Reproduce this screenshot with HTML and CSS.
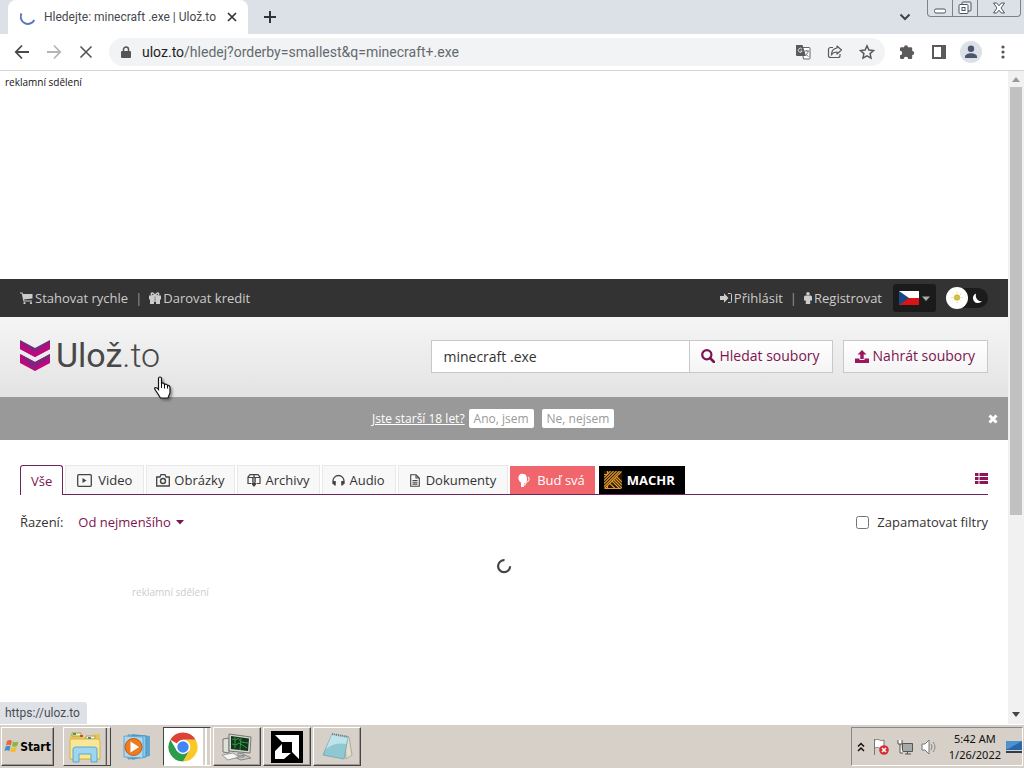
FILE: index.html
```html
<!DOCTYPE html>
<html lang="cs">
<head>
<meta charset="utf-8">
<title>Hledejte: minecraft .exe | Ulož.to</title>
<link rel="stylesheet" href="styles.css">
</head>
<body>
<div class="tabstrip">
  <div class="browser-tab">
    <svg class="tab-spinner" width="16" height="16" viewBox="0 0 16 16"><path d="M1.500 4.500a7 7 0 0 0 12.800 6.500" fill="none" stroke="#5a78bd" stroke-width="2"/></svg>
    <span class="tab-title">Hledejte: minecraft .exe | Ulož.to</span>
    <button class="plain" aria-label="Close tab"><svg width="10" height="10" viewBox="0 0 10 10"><path d="M1 1l8 8M9 1l-8 8" stroke="#333" stroke-width="1.700"/></svg></button>
  </div>
  <button class="plain new-tab" aria-label="New tab"><svg width="12" height="12" viewBox="0 0 12 12"><path d="M6 0v12M0 6h12" stroke="#333" stroke-width="2"/></svg></button>
  <button class="plain tab-search" aria-label="Search tabs"><svg width="12" height="8" viewBox="0 0 12 8"><path d="M1.500 1.500L6 6l4.500-4.500" fill="none" stroke="#444" stroke-width="2"/></svg></button>
  <div class="window-buttons">
    <button aria-label="Minimize"><svg width="14" height="14" viewBox="0 0 14 14"><rect x="1.500" y="8" width="11" height="4" rx="1.500" fill="#fff" stroke="#4d5561"/></svg></button>
    <button aria-label="Restore"><svg width="14" height="14" viewBox="0 0 14 14"><rect x="4" y="1" width="9" height="9" rx="1" fill="#eee" stroke="#4d5561"/><rect x="1" y="3.500" width="9" height="9" rx="1" fill="#fff" stroke="#4d5561"/><rect x="4" y="6.500" width="3" height="3" fill="none" stroke="#4d5561"/></svg></button>
    <button class="wide" aria-label="Close"><svg width="14" height="14" viewBox="0 0 14 14"><path d="M1.500 2h3.200L7 4.800 9.300 2h3.200L9 7l3.500 5H9.300L7 9.200 4.700 12H1.500L5 7z" fill="#fff" stroke="#4d5561"/></svg></button>
  </div>
</div>

<div class="toolbar">
  <button class="plain" aria-label="Back"><svg width="16" height="16" viewBox="0 0 16 16"><path d="M15 8H2M8 1.500L1.800 8 8 14.500" fill="none" stroke="#4a4a4a" stroke-width="1.800"/></svg></button>
  <button class="plain" aria-label="Forward"><svg width="16" height="16" viewBox="0 0 16 16"><path d="M1 8h13M8 1.500L14.200 8 8 14.500" fill="none" stroke="#b5b5b5" stroke-width="1.800"/></svg></button>
  <button class="plain" aria-label="Stop"><svg width="16" height="16" viewBox="0 0 16 16"><path d="M2.500 2.500l11 11M13.500 2.500l-11 11" stroke="#555" stroke-width="1.600"/></svg></button>
  <div class="omnibox">
    <svg width="10" height="13" viewBox="0 0 10 13"><path d="M2.500 6V3.500a2.500 2.500 0 0 1 5 0V6" fill="none" stroke="#555" stroke-width="1.500"/><rect y="5" width="10" height="7" rx="1" fill="#555"/></svg>
    <span class="url"><b>uloz.to</b>/hledej?orderby=smallest&amp;q=minecraft+.exe</span>
    <button class="plain" aria-label="Translate"><svg width="16" height="16" viewBox="0 0 16 16"><path d="M6.500 3.500H14a1 1 0 0 1 1 1V14a1 1 0 0 1-1 1H8.500z" fill="#fff" stroke="#666"/><path d="M1 1h6.500L11 12H2a1 1 0 0 1-1-1z" fill="#5a5a5a"/><path d="M7 5.200A2 2 0 1 0 7.200 7H5.300" fill="none" stroke="#ddd"/><path d="M9.500 7h4.500M11.800 6v1M13 7c0 2-1 3-2 3.500l2.500 2" fill="none" stroke="#777"/></svg></button>
    <button class="plain" aria-label="Share"><svg width="16" height="16" viewBox="0 0 16 16"><path d="M6 3.500H3.500a2 2 0 0 0-2 2v6a2 2 0 0 0 2 2H11a2 2 0 0 0 2-2V10M10 2l4.500 4L10 10V8C7 8 5.500 9 4.500 11c0-3 1.500-6.500 5.500-7z" fill="none" stroke="#5a5a5a" stroke-width="1.200" stroke-linejoin="round"/></svg></button>
    <button class="plain" aria-label="Bookmark"><svg width="16" height="16" viewBox="0 0 16 16"><path d="M8 1.800l1.900 4.200 4.600.5-3.400 3.100.9 4.500L8 11.800l-4 2.300.9-4.500L1.500 6.500 6.100 6z" fill="none" stroke="#5a5a5a" stroke-width="1.500"/></svg></button>
  </div>
  <div class="tools">
    <button class="plain" aria-label="Extensions"><svg width="16" height="16" viewBox="0 0 16 16"><path d="M5 3.200a2 2 0 0 1 4 0h3a1.200 1.200 0 0 1 1.200 1.200V7a2 2 0 0 1 0 4v2.800A1.200 1.200 0 0 1 12 15H9.200a2.200 2.200 0 0 0-4.400 0H2.200A1.200 1.200 0 0 1 1 13.800v-2.600a2.200 2.200 0 0 0 0-4.400V4.400a1.200 1.200 0 0 1 1.200-1.200z" fill="#5a5a5a"/></svg></button>
    <button class="plain" aria-label="Side panel"><svg width="16" height="16" viewBox="0 0 16 16"><path d="M1 1h14v14H1z" fill="#5a5a5a"/><path d="M3 3h7v10H3z" fill="#fff"/></svg></button>
    <button class="plain" aria-label="Profile"><svg width="22" height="22" viewBox="0 0 22 22"><circle cx="11" cy="11" r="11" fill="#dde0e7"/><circle cx="11" cy="7.800" r="3.200" fill="#4b5670"/><path d="M5 17v-1.500c0-2 3-3.300 6-3.300s6 1.300 6 3.300V17z" fill="#4b5670"/></svg></button>
    <button class="plain" aria-label="Menu"><svg width="16" height="16" viewBox="0 0 16 16"><g fill="#555"><circle cx="8" cy="3" r="1.600"/><circle cx="8" cy="8" r="1.600"/><circle cx="8" cy="13" r="1.600"/></g></svg></button>
  </div>
</div>

<div class="viewport">
  <main class="page">
    <div class="ad"><span>reklamní sdělení</span></div>
    <nav class="topbar">
      <a href="#"><svg width="13" height="12" viewBox="0 0 13 12"><path d="M0 .5h2.500L3 2h9.500v4.500L4 7.500l.3 1H12v1H3.400L1.800 1.500H0z" fill="#ccc"/><circle cx="4.500" cy="11" r="1.100" fill="#ccc"/><circle cx="11" cy="11" r="1.100" fill="#ccc"/></svg>Stahovat rychle</a>
      <i>|</i>
      <a href="#"><svg width="12" height="12" viewBox="0 0 12 12"><path d="M0 3.500h5V12H1V7.500H0zM7 3.500h5v4h-1V12H7z" fill="#ccc"/><path d="M6 4C4.500 0 1.500.5 2.500 3 3 4 6 4 6 4s3 0 3.500-1C10.500.5 7.500 0 6 4v6" fill="none" stroke="#ccc" stroke-width="1.500"/></svg>Darovat kredit</a>
      <a href="#" class="push"><svg width="12" height="12" viewBox="0 0 12 12"><path d="M0 4h4V1.200L8.500 6 4 10.800V8H0z" fill="#ccc"/><path d="M8 1.500h2.500a1 1 0 0 1 1 1v7a1 1 0 0 1-1 1H8" fill="none" stroke="#ccc"/></svg>Přihlásit</a>
      <i>|</i>
      <a href="#"><svg width="8" height="12" viewBox="0 0 8 12"><circle cx="4" cy="1.800" r="1.800" fill="#ccc"/><path d="M1.500 3.500h5A1.500 1.500 0 0 1 8 5v3.500H6.200V12H1.800V8.500H0V5a1.500 1.500 0 0 1 1.500-1.500z" fill="#ccc"/></svg>Registrovat</a>
      <button class="flag" aria-label="Čeština"><svg width="32" height="14" viewBox="0 0 32 14"><path d="M0 0h20v7H0z" fill="#fff"/><path d="M0 7h20v7H0z" fill="#d7141a"/><path d="M0 0l10 7-10 7z" fill="#174a83"/><path d="M23 5.500h8L27 10z" fill="#aaa"/></svg></button>
      <button class="theme" aria-label="Světlý režim"><svg width="42" height="22" viewBox="0 0 42 22"><rect y="1" width="42" height="20" rx="10" fill="#1b1b1b"/><circle cx="11" cy="11" r="11" fill="#fff"/><circle cx="11" cy="10.500" r="3" fill="#c9b824"/><path d="M11 5v11M5.500 10.500h11M7 6.500l8 8M15 6.500l-8 8" stroke="#d8ce70" stroke-width="1" stroke-dasharray="1 1"/><path d="M30 6.500a5 5 0 1 0 6 7.500c-4 1-7-3-6-7.500z" fill="#fff"/></svg></button>
    </nav>
    <header class="header">
      <a class="logo" href="#" aria-label="Ulož.to">
        <svg width="30" height="31" viewBox="0 0 30 31"><path d="M0 0l15 8v9L0 9z" fill="#7d267e"/><path d="M30 0L15 8v9l15-8z" fill="#7d267e"/><path d="M0 3l15 9 15-9v6l-15 8L0 9z" fill="#bd087d"/><path d="M0 14l15 8 15-8v9l-15 8-15-8z" fill="#bd087d"/><path d="M0 14l15 8v9zM30 14v4l-15 8v-4z" fill="#7d267e"/></svg>
        <span>Ulož<em>.to</em></span>
      </a>
      <form class="search">
        <input type="text" value="minecraft .exe" aria-label="Hledat">
        <button type="button" class="btn"><svg width="14" height="14" viewBox="0 0 14 14"><circle cx="5.800" cy="5.800" r="4.600" fill="none" stroke="#7d1450" stroke-width="2.200"/><path d="M9 9l4 4" stroke="#7d1450" stroke-width="2.600" stroke-linecap="round"/></svg>Hledat soubory</button>
      </form>
      <button class="btn"><svg width="14" height="13" viewBox="0 0 14 13"><path d="M7 0l4.500 4.500H8.700V9H5.300V4.500H2.500zM0 8.500h4.500V10h5V8.500H14V13H0z" fill="#9c1560"/></svg>Nahrát soubory</button>
    </header>
    <div class="agebar">
      <a href="#">Jste starší 18 let?</a>
      <button>Ano, jsem</button>
      <button>Ne, nejsem</button>
      <button class="plain dismiss" aria-label="Zavřít"><svg width="10" height="10" viewBox="0 0 10 10"><path d="M1.500 1.500l7 7M8.500 1.500l-7 7" stroke="#fff" stroke-width="3"/></svg></button>
    </div>
    <section class="results">
      <nav class="tabs">
        <a href="#" class="active">Vše</a>
        <a href="#" class="video"><svg width="15" height="13" viewBox="0 0 15 13"><rect x=".7" y=".7" width="13.600" height="11.600" rx="1" fill="none" stroke="#444" stroke-width="1.300"/><path d="M5.500 4v5l4-2.500z" fill="#444"/></svg>Video</a>
        <a href="#"><svg width="14" height="13" viewBox="0 0 14 13"><path d="M.7 3h3.200L5 .7h4L10.100 3h3.200v9H.7z" fill="none" stroke="#444" stroke-width="1.300"/><circle cx="7" cy="7" r="2.500" fill="none" stroke="#444" stroke-width="1.400"/></svg>Obrázky</a>
        <a href="#"><svg width="14" height="13" viewBox="0 0 14 13"><path d="M4.500 9.500H1V3l2-2.300h8L13 3v6.500H9.500M1 3.500h12M7 1v11" fill="none" stroke="#444" stroke-width="1.200"/><path d="M5.500 3.500V8M8.500 3.500V8" stroke="#444" stroke-width=".8"/><path d="M5 8.500h4v2L7 13l-2-2.500z" fill="#444"/></svg>Archivy</a>
        <a href="#"><svg width="13" height="13" viewBox="0 0 13 13"><path d="M1 10V7a5.500 5.500 0 0 1 11 0v3" fill="none" stroke="#444" stroke-width="1.300"/><path d="M1 7h2.800v4.500H2.500L1 10zM12 7H9.200v4.500h1.300L12 10z" fill="#444"/></svg>Audio</a>
        <a href="#" class="doc"><svg width="10" height="13" viewBox="0 0 10 13"><path d="M.7.7H6L9.300 4v8.300H.7zM6 .7V4h3.300M2.500 6.500h5M2.500 8.300h5M2.500 10.100h5" fill="none" stroke="#444" stroke-width="1.100"/></svg>Dokumenty</a>
        <a href="#" class="pink"><svg width="12" height="15" viewBox="0 0 12 15"><path d="M5 1C2 0 0 3 .5 6c.5 2 1.500 3 2.500 3.500V14h3v-3.500c2 0 3-1.500 3-4C9 3 8 1 5 1z" fill="#fff"/><path d="M10 4c2 2 1 4-1 5M5 13c2-1 3-2 3.500-4" fill="none" stroke="#ffe0e0" stroke-width="1.200"/></svg>Buď svá</a>
        <a href="#" class="black"><svg width="18" height="18" viewBox="0 0 18 18"><path d="M0 0h18v18H0z" fill="#2a1804"/><path d="M0 3.500h3.500V0M0 6.500L6.500 0M0 9.500L9.500 0M0 12.500L12.500 0M0 15.500L15.500 0M.5 17.500L17.500.5M8 10l7.500 7.500M9.500 8.500L18 17M11 7l7 7M12.500 5.500L18 11M3.500 14.500v3M6 12.500l5 5M1 17.500h16" fill="none" stroke="#e39a2c" stroke-width="1.100"/></svg>MACHR</a>
        <button class="plain list-view" aria-label="Seznam"><svg width="13" height="11" viewBox="0 0 13 11"><path d="M0 0h3.500v3H0zM4.500 0H13v3H4.500zM0 4h3.500v3H0zM4.500 4H13v3H4.500zM0 8h3.500v3H0zM4.500 8H13v3H4.500z" fill="#8e1559"/></svg></button>
      </nav>
      <div class="filters">
        <span class="sort-label">Řazení:</span>
        <button class="plain sort">Od nejmenšího<svg width="8" height="5" viewBox="0 0 8 5"><path d="M0 0h8L4 4.500z" fill="#7d1450"/></svg></button>
        <label><input type="checkbox">Zapamatovat filtry</label>
      </div>
      <div class="loading"><svg width="16" height="16" viewBox="0 0 16 16"><path d="M8.500 2.200a6 6 0 1 0 5.600 6" fill="none" stroke="#444" stroke-width="2.200"/></svg></div>
      <div class="fading">reklamní sdělení</div>
    </section>
  </main>
  <div class="scrollbar"><svg width="8" height="5" viewBox="0 0 8 5"><path d="M0 5h8L4 0z" fill="#999"/></svg><div class="thumb"></div><svg class="down" width="8" height="5" viewBox="0 0 8 5"><path d="M0 0h8L4 5z" fill="#444"/></svg></div>
  <div class="status">https://uloz.to</div>
</div>

<footer class="taskbar">
  <button class="task start"><svg width="16" height="15" viewBox="0 0 16 15"><path d="M3 2c2-1.500 3.500-1 5 0L6.800 6.500c-1.500-1-3-1-4.800 0z" fill="#e8663c"/><path d="M9 2.500c2 1 3.500 1 5.500 0L13.200 7C11.500 8 9.500 8 8 7z" fill="#86b83e"/><path d="M1.800 7.500c1.800-1 3.200-1 4.700 0L5.300 12c-1.500-1-3-1-5 0z" fill="#3f8fd0"/><path d="M7.500 8c1.500 1 3.500 1 5.300 0l-1.300 4.500c-2 1-3.500 1-5.200 0z" fill="#f3bd2d"/></svg>Start</button>
  <button class="task stacked explorer" aria-label="Explorer"><svg width="34" height="32" viewBox="0 0 34 32"><path d="M2 4h8l2 2h14v-3h6v26H2z" fill="#e5c65c"/><path d="M4 2h9v3H4zM18 5h9v3h-9z" fill="#fff7c9" stroke="#b79b45"/><path d="M2 8h28l2 2v18H2z" fill="#f8e796" stroke="#d5b551"/><path d="M5 2h3v2H5z" fill="#40a050"/><path d="M12 4h3v2h-3z" fill="#d04832"/><path d="M20 6h3v2h-3z" fill="#4886cc"/><path d="M5 18q0-2 3-2h18q3 0 3 2v13h-6v-8H11v8H5z" fill="#9ed5ef" stroke="#5da8cf"/></svg></button>
  <button class="task flat" aria-label="Media Player"><svg width="28" height="28" viewBox="0 0 28 28"><path d="M9 1l18 2v20l-18 4z" fill="#5fa5d2"/><path d="M5 2l18 1v21L5 26z" fill="#8fc9e8" stroke="#4c91c0"/><path d="M1 3l19 1v21L1 24z" fill="#a9d8f0" stroke="#62a8d2"/><circle cx="10.500" cy="14" r="8.500" fill="#ee7c1f" stroke="#c65a10"/><path d="M7.500 8.500v11l8.500-5.500z" fill="#fff"/></svg></button>
  <button class="task pressed stacked" aria-label="Chrome"><svg width="30" height="30" viewBox="0 0 30 30"><path d="M15 15L2.400 7.750A14.500 14.500 0 0 1 27.600 7.750H15z" fill="#dc4334"/><path d="M27.600 7.750A14.500 14.500 0 0 1 15 29.500l6.300-10.900A7.250 7.250 0 0 0 15 7.750z" fill="#fbc824"/><path d="M2.400 7.750A14.500 14.500 0 0 0 15 29.500l6.300-10.900H8.700z" fill="#2c9c4b"/><circle cx="15" cy="15" r="7.200" fill="#fff"/><circle cx="15" cy="15" r="5.700" fill="#4285f4"/></svg></button>
  <button class="task" aria-label="Monitor"><svg width="32" height="30" viewBox="0 0 32 30"><path d="M2 7l6-1v15l-6-1z" fill="#dde0d8" stroke="#777"/><path d="M8 2l22 3-1 16-21-2z" fill="#d5d6cc" stroke="#777"/><path d="M10 4l18 2.500-1 12.500-17-2z" fill="#12351c"/><path d="M11 7l4 1 2-2 3 4 7 1M11 12l4 1 3-2 8 5M14 5v11M20 6l-1 12" fill="none" stroke="#2f9a41"/><path d="M17 21l6 1v3h-6zM13 25l11-2 6 3-10 2z" fill="#c9c9c4" stroke="#888"/><path d="M1 23l11-2 6 4-11 3z" fill="#f5f5f1" stroke="#999"/></svg></button>
  <button class="task" aria-label="AMD"><svg width="32" height="32" viewBox="0 0 32 32"><path d="M0 0h32v32H0z"/><path d="M4 4h24v24l-7-7V11H11z" fill="#fff"/><path d="M11 13v9h9l-7 6H4v-8z" fill="#fff"/></svg></button>
  <button class="task" aria-label="Notepad"><svg width="32" height="30" viewBox="0 0 32 30"><path d="M24 4l4 1 3 18-6 4z" fill="#e4dfc5" stroke="#aaa"/><path d="M11 2l16 3-4 22-21-4z" fill="#8fc7d2" stroke="#7baeb8"/><path d="M11 2l16 3-2 7Q14 10 5 17z" fill="#bfe3ea"/><path d="M11 2l16 3" stroke="#6d7b7d" stroke-width="2" stroke-dasharray="1 1"/></svg></button>
  <div class="tray">
    <svg width="8" height="10" viewBox="0 0 8 10"><path d="M1 4.500l3-3 3 3M1 9l3-3 3 3" fill="none" stroke="#111" stroke-width="1.500"/></svg>
    <svg width="16" height="18" viewBox="0 0 16 18"><path d="M1.500 1v16M2 2c4-2 5 2 9 0v8c-4 2-5-2-9 0" fill="#fff" stroke="#777"/><circle cx="11" cy="12" r="4.800" fill="#d52e35"/><path d="M9 10l4 4M13 10l-4 4" stroke="#fff" stroke-width="1.500"/></svg>
    <svg width="16" height="16" viewBox="0 0 16 16"><path d="M5.500 4.500h10v8h-10zM8 15h6M10.500 13v2" fill="#a5aaa8" stroke="#555"/><path d="M1 1v4h4V1M3 5v9h3" fill="#fff" stroke="#555"/></svg>
    <svg width="16" height="16" viewBox="0 0 16 16"><path d="M1 5h3l4-4v14l-4-4H1z" fill="#fff" stroke="#777"/><path d="M10 5q2 3 0 6M12 3q4 5 0 10" fill="none" stroke="#888"/></svg>
    <time>5:42 AM<br>1/26/2022</time>
    <svg width="16" height="14" viewBox="0 0 16 14"><path d="M0 1h16v9H0z" fill="#2768ad"/><path d="M0 1h16L2 9H0z" fill="#4d92d0"/><path d="M0 11h16v2H0z" fill="#333b48"/></svg>
  </div>
</footer>
<svg class="cursor" width="20" height="24" viewBox="0 0 20 24"><path d="M5.500 13V2.500q0-1.500 1.500-1.500t1.500 1.500V8l.5-1q2-.5 2.500 1.500 2-1 3 1 2-.5 2.500 2V17l-2 5H7.500L5 18l-3-4.500Q1 12 2.500 11.500q1.500 0 3 2z" fill="#fff" stroke="#111" stroke-width="1.200"/><path d="M8.500 8v4M11.500 8.500v4M14.500 9.500v3" stroke="#111"/></svg>
</body>
</html>
```
FILE: styles.css
```css
* { box-sizing: border-box; }
body { margin: 0; height: 100vh; display: flex; flex-direction: column; overflow: hidden; font: 13px/18px "Open Sans", sans-serif; color: #333; background: #fff; }
svg { display: block; flex: none; }
a { text-decoration: none; color: inherit; }
button, input { font: inherit; color: inherit; margin: 0; }
.plain { border: 0; padding: 0; background: none; display: flex; align-items: center; }

.tabstrip { flex: none; height: 34px; display: flex; align-items: center; background: #dce0e7; padding-left: 8px; }
.browser-tab { align-self: stretch; display: flex; align-items: center; background: #fff; border-radius: 8px 8px 0 0; width: 240px; padding: 0 11px 0 12px; gap: 8px; }
.tab-title { flex: 1; font-family: Roboto, sans-serif; font-size: 12px; white-space: nowrap; color: #45484d; }
.new-tab { margin-left: 16px; }
.tab-search { margin-left: auto; margin-right: 16px; }
.window-buttons { align-self: flex-start; display: flex; height: 17px; border: 1px solid #7b828c; border-top: 0; border-radius: 0 0 4px 4px; margin-right: 3px; }
.window-buttons button { width: 25px; padding: 0; border: 0; border-right: 1px solid #7b828c; background: none; display: flex; justify-content: center; align-items: center; }
.window-buttons .wide { width: 42px; border-right: 0; }

.toolbar { flex: none; height: 37px; display: flex; align-items: center; gap: 16px; padding: 0 14px; border-bottom: 1px solid #d4d4d4; background: #fff; }
.omnibox { flex: 1; height: 28px; border-radius: 14px; background: #f1f3f4; display: flex; align-items: center; gap: 16px; padding: 0 10px 0 12px; margin-left: -1px; }
.url { flex: 1; font-family: Roboto, sans-serif; font-size: 14px; color: #666a6e; margin-left: -5px; white-space: nowrap; }
.url b { font-weight: 400; color: #222; }
.tools { display: flex; align-items: center; gap: 16px; margin-right: -1px; margin-left: -2px; }
.tools button:nth-child(3) { margin: 0 -3px; }

.viewport { flex: 1; min-height: 0; display: flex; position: relative; }
.page { flex: 1; min-width: 0; overflow: hidden; }
.ad { height: 208px; padding: 2px 5px; font-size: 10px; color: #111; }
.topbar { height: 38px; display: flex; align-items: center; background: #333; color: #ccc; padding: 0 20px; }
.topbar a { display: flex; align-items: center; gap: 2px; }
.topbar i { font-style: normal; margin: 0 7px; color: #999; }
.push { margin-left: auto; }
.topbar button { padding: 0; border: 0; background: none; }
.topbar .flag { background: #1b1b1b; border-radius: 3px; padding: 7px 5px 7px 6px; margin-left: 11px; height: 28px; }
.topbar .theme { margin-left: 10px; }
.header { height: 80px; padding: 0 20px 2px; display: flex; align-items: center; background: linear-gradient(#f5f5f5, #e3e3e3); }
.logo { display: flex; align-items: center; gap: 6px; color: #484848; font: 34px/40px Roboto, sans-serif; margin-right: auto; padding-bottom: 2px; }
.logo em { font-style: normal; font-weight: 300; }
.search { display: flex; margin-right: 10px; }
.search input { width: 258px; height: 33px; border: 1px solid #c8c8c8; border-right: 0; padding: 0 11px; font-size: 14px; background: #fff; outline: 0; }
.btn { height: 33px; border: 1px solid #c8c8c8; background: linear-gradient(#fff, #f4f4f4); color: #7d1450; font-size: 14px; padding: 0 12px 0 11px; display: flex; align-items: center; gap: 4px; white-space: nowrap; }
.agebar { height: 43px; background: #999; color: #fff; display: flex; align-items: center; padding: 0 10px 0 372px; font-size: 12px; }
.agebar a { text-decoration: underline; margin-right: 4px; }
.agebar button:not(.plain) { border: 0; border-radius: 2px; background: #fff; color: #999; height: 19px; padding: 0 5px; margin-right: 8px; line-height: 19px; }
.dismiss { margin-left: auto; }
.results { padding: 25px 20px 0; }
.tabs { display: flex; align-items: flex-end; gap: 2px; border-bottom: 1px solid #6d2457; height: 30px; }
.tabs a { height: 29px; display: flex; align-items: center; gap: 4px; padding: 0 10px 0 9px; border: 1px solid #e8e8e8; border-bottom: 0; background: #f8f8f8; white-space: nowrap; }
.tabs .active { height: 30px; margin-bottom: -1px; padding: 0 10px; border-color: #6d2457; border-radius: 3px 3px 0 0; background: #fff; color: #7d1450; }
.tabs .video { gap: 6px; padding: 0 11px; }
.tabs .doc { gap: 6px; padding: 0 11px; }
.tabs .pink { background: #f0666c; color: #fff; border: 0; gap: 7px; padding: 0 10px 0 8px; height: 28px; }
.tabs .black { background: #000; color: #fff; border: 0; gap: 5px; padding: 0 10px 0 5px; margin-left: 2px; height: 28px; font-weight: 700; }
.list-view { margin-left: auto; margin-bottom: 10px; }
.filters { display: flex; align-items: center; margin-top: 18px; }
.sort-label { margin-right: 15px; }
.sort { color: #7d1450; gap: 5px; }
.filters label { margin-left: auto; display: flex; align-items: center; gap: 8px; }
.filters input { width: 13px; height: 13px; }
.loading { display: flex; justify-content: center; margin-top: 27px; }
.fading { margin: 9px 0 0 112px; font-size: 10px; color: #ccc; }
.scrollbar { width: 16px; background: #f1f1f1; display: flex; flex-direction: column; align-items: center; padding: 6px 0 7px; }
.thumb { width: 12px; height: 428px; background: #c1c1c1; margin-top: 5px; }
.scrollbar .down { margin-top: auto; }
.status { position: absolute; left: 0; bottom: 0; height: 22px; padding: 2px 7px 2px 5px; background: #dee1e6; color: #484d55; border-radius: 0 3px 0 0; font-family: Roboto, sans-serif; font-size: 12px; }

.taskbar { flex: none; height: 44px; background: #d6d0c8; border-top: 1px solid #fff; display: flex; align-items: center; padding: 0 1px; }
.task { width: 48px; height: 39px; margin-left: 2px; padding: 0; border: 1px solid; border-color: #fff #444 #444 #fff; box-shadow: inset -1px -1px #999; background: #d6d0c8; display: flex; align-items: center; justify-content: center; }
.task.start { width: 53px; margin-left: 0; margin-right: 7px; font: bold 12px/16px "DejaVu Sans Condensed", "DejaVu Sans", sans-serif; color: #000; }
.task.stacked { box-shadow: inset -3px 0 #d6d0c8, inset -4px 0 #555, inset -5px 0 #aaa; padding-right: 5px; }
.task.flat { border-color: transparent; box-shadow: none; }
.task.pressed { background: #fff; border-color: #444 #fff #fff #444; box-shadow: inset -3px 0 #d6d0c8, inset -5px 0 #fff, inset -7px 0 #d6d0c8; padding-right: 9px; }
.tray { margin-left: auto; height: 39px; border: 1px solid; border-color: #888 #fff #fff #888; display: flex; align-items: center; gap: 8px; padding: 0 0 0 5px; }
.tray time { font: 11px/16px "Noto Sans", sans-serif; color: #111; text-align: center; margin-left: 4px; }
.tray time + svg { margin-left: -3px; }
.cursor { position: absolute; left: 153px; top: 376px; filter: drop-shadow(2px 2px 1px #0005); }
```
